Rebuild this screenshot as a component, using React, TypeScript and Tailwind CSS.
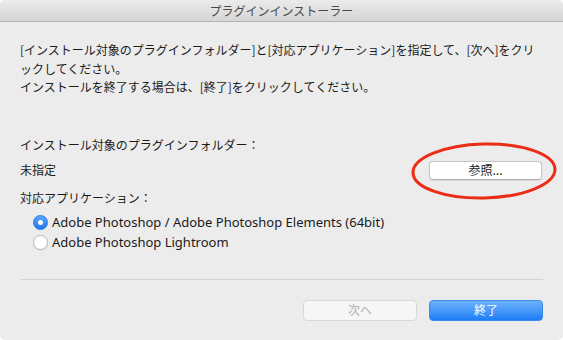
export default function App() {
  const jp = { fontFamily: '"Noto Sans CJK JP", "Noto Sans", sans-serif' };

  return (
    <div className="w-[563px] h-[340px] bg-white">
      <div
        className="flex flex-col w-full h-full bg-[#ececec] rounded-[5px] overflow-hidden text-[#1a1a1a]"
        style={jp}
      >
        {/* title bar */}
        <div className="h-[22px] flex items-center justify-center bg-gradient-to-b from-[#ebebeb] to-[#d5d5d5] border-b border-[#b4b4b4] text-[12px] text-[#4a4a4a]">
          プラグインインストーラー
        </div>

        <div className="flex flex-col px-[20px]">
          <p className="mt-[19px] text-[12px] leading-[18.5px]">
            [インストール対象のプラグインフォルダー]と[対応アプリケーション]を指定して、[次へ]をクリ
            <br />
            ックしてください。
            <br />
            インストールを終了する場合は、[終了]をクリックしてください。
          </p>

          <p className="mt-[39px] text-[12px] leading-[18px]">
            インストール対象のプラグインフォルダー：
          </p>

          <div className="mt-[7px] flex items-center justify-between">
            <span className="text-[12px] leading-[18px]">未指定</span>
            <div className="relative mr-[1px]">
              <button className="w-[113px] h-[19px] flex items-center justify-center bg-white border border-[#c6c6c6] border-b-[#b0b0b0] rounded-[4px] text-[12px] leading-none text-[#222] shadow-[0_0.5px_1px_rgba(0,0,0,0.08)]">
                参照...
              </button>
              <svg
                className="absolute left-[-18px] top-[-19px] pointer-events-none"
                width="146"
                height="58"
                viewBox="0 0 146 58"
              >
                <ellipse
                  cx="73"
                  cy="29"
                  rx="71"
                  ry="27"
                  fill="none"
                  stroke="#ea2d17"
                  strokeWidth="3"
                  transform="rotate(-1.5 73 29)"
                />
              </svg>
            </div>
          </div>

          <p className="mt-[9px] text-[12px] leading-[18px]">対応アプリケーション：</p>

          <div
            className="mt-[6px] flex flex-col pl-[13px] text-[13px]"
            style={{ fontFamily: '"Noto Sans", "Noto Sans CJK JP", sans-serif' }}
          >
            <label className="h-[20px] flex items-center gap-[3px]">
              <span className="w-[15px] h-[15px] rounded-full bg-gradient-to-b from-[#5aa6f8] to-[#1a78f0] border border-[#2a7ee6] flex items-center justify-center">
                <span className="w-[5px] h-[5px] rounded-full bg-white" />
              </span>
              <span className="ml-[1px]">Adobe Photoshop / Adobe Photoshop Elements (64bit)</span>
            </label>
            <label className="h-[20px] flex items-center gap-[3px]">
              <span className="w-[15px] h-[15px] rounded-full bg-white border border-[#b9b9b9] shadow-[0_0.5px_1px_rgba(0,0,0,0.1)]" />
              <span className="ml-[1px]">Adobe Photoshop Lightroom</span>
            </label>
          </div>

          <div className="mt-[26px] h-px bg-[#d3d3d3]" />

          <div className="mt-[20px] flex justify-end gap-[12px]">
            <button className="w-[114px] h-[21px] flex items-center justify-center bg-[#f6f6f6] border border-[#d8d8d8] rounded-[4px] text-[12px] leading-none text-[#b3b3b3]">
              次へ
            </button>
            <button className="w-[114px] h-[21px] flex items-center justify-center bg-gradient-to-b from-[#6cb2fb] to-[#1a7cf6] border border-[#3c8ce8] rounded-[4px] text-[12px] leading-none text-white">
              終了
            </button>
          </div>
        </div>
      </div>
    </div>
  );
}
